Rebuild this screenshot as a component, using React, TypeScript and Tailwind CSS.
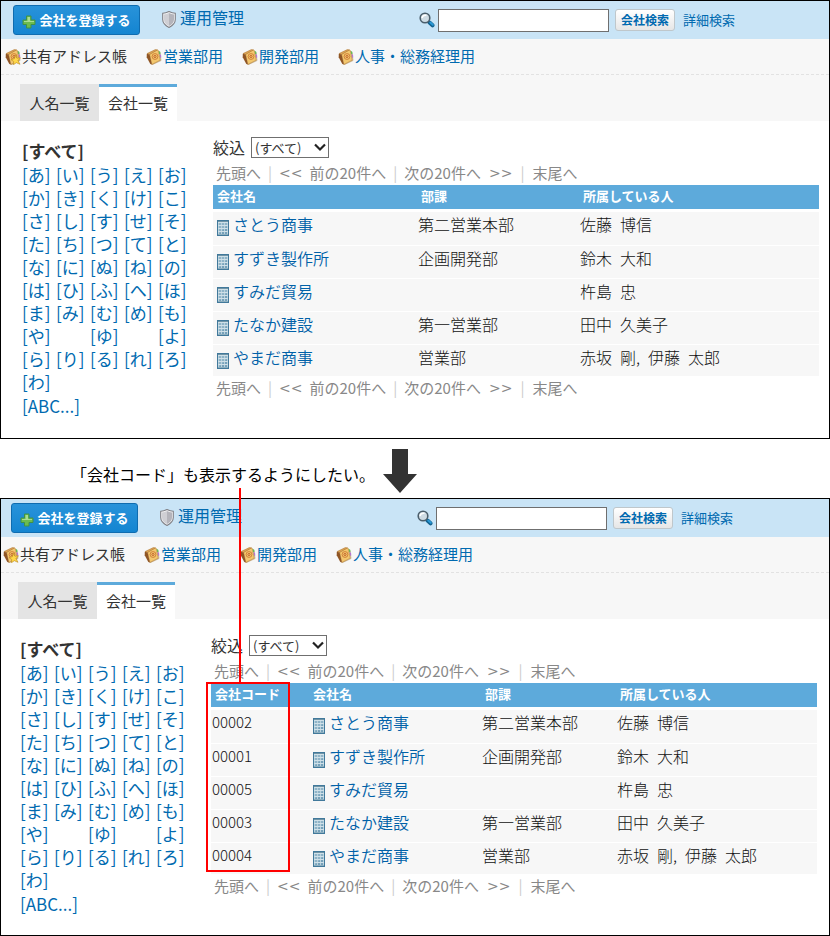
import React from "react";

type Company = {
  code: string;
  name: string;
  department: string;
  members: string;
};

const companies: Company[] = [
  { code: "00002", name: "さとう商事", department: "第二営業本部", members: "佐藤\u2002博信" },
  { code: "00001", name: "すずき製作所", department: "企画開発部", members: "鈴木\u2002大和" },
  { code: "00005", name: "すみだ貿易", department: "", members: "杵島\u2002忠" },
  { code: "00003", name: "たなか建設", department: "第一営業部", members: "田中\u2002久美子" },
  { code: "00004", name: "やまだ商事", department: "営業部", members: "赤坂\u2002剛,\u2002伊藤\u2002太郎" },
];

const kanaRows = [
  "あいうえお",
  "かきくけこ",
  "さしすせそ",
  "たちつてと",
  "なにぬねの",
  "はひふへほ",
  "まみむめも",
  "や ゆ よ",
  "らりるれろ",
  "わ",
];

const books = ["営業部用", "開発部用", "人事・総務経理用"];

const PlusIcon = () => (
  <svg width="14" height="14" viewBox="0 0 14 14" aria-hidden="true">
    <path
      d="M4.500 1h4.500v4H13v4.500H9V13H4.500V9.500H1V5h3.500z"
      fill="#6cbb4e"
      stroke="#3f9148"
      strokeWidth="1"
    />
    <path d="M5.500 2H8v4h4v1H2V6h3.500z" fill="#a9dd92" />
  </svg>
);

const ShieldIcon = () => (
  <svg width="14" height="17" viewBox="0 0 14 17" aria-hidden="true">
    <path
      d="M.7 2.300C3 2.300 5 1.600 7 .6c2 1 4 1.700 6.300 1.700v6.200c0 3.700-2.500 6-6.300 7.900C3.200 14.500.7 12.200.7 8.500z"
      fill="#f4f4f6"
      stroke="#808086"
      strokeWidth="1.100"
    />
    <path d="M7 2c1.600.8 3.200 1.300 5 1.400v5.100c0 3-1.800 4.900-5 6.600z" fill="#b4b4bb" />
    <path d="M2 3.400C3.800 3.300 5.400 2.800 7 2v13.100C3.800 13.400 2 11.500 2 8.500z" fill="#cfcfd4" />
  </svg>
);

const SearchIcon = () => (
  <svg width="16" height="16" viewBox="0 0 16 16" aria-hidden="true">
    <path d="M10.500 10.500l3 2.800" stroke="#12618f" strokeWidth="4" strokeLinecap="round" />
    <path d="M11.300 10.500l2.500 2.300" stroke="#2b9ad6" strokeWidth="2" strokeLinecap="round" />
    <circle cx="6" cy="6" r="4.800" fill="#cfdce4" stroke="#4b5e6b" strokeWidth="1.600" />
    <path d="M3 6C3.500 4 5 3 7.500 3.300" stroke="#fff" strokeWidth="1.500" fill="none" />
  </svg>
);

const BookIcon = ({ starred = false }: { starred?: boolean }) => (
  <svg width="16" height="16" viewBox="0 0 16 16" aria-hidden="true">
    <path d="M11.500 1.200l2.300 2.300 1.200 8-8.500 4z" fill="#f3ead6" stroke="#a98a5f" strokeWidth=".6" />
    <path d="M12.500 1.800l1.700.9.3 2.300-1.400.3z" fill="#5fbf5a" />
    <path d="M13.200 5.300l1.800.3.300 2.800-1.500.3z" fill="#b678cf" />
    <path d="M3.500 5.300L11.300.9l.9.6 2 9.700-8.400 4.300z" fill="#f3c76e" stroke="#b9853d" strokeWidth=".6" />
    <path d="M1 4.600L9.300.6l2 .3-7.700 4.500z" fill="#e0a85a" stroke="#a8702a" strokeWidth=".5" />
    <path d="M.8 4.800l2.800.7 2.300 10-1.600-.6L.7 8.200z" fill="#8f5524" />
    <circle cx="9" cy="7.500" r="2.900" fill="none" stroke="#c9702c" strokeWidth=".8" />
    <circle cx="9" cy="7.500" r="1.100" fill="none" stroke="#b9521f" strokeWidth=".8" />
    {starred && (
      <path
        d="M10.600 6.300l1.300 2.900 3.600-.4-2.500 2.700 2 3.800-3.700-1.600-2.900 2.100.3-3.300-2.700-1.900 3.400-.9z"
        fill="#ffd84a"
        stroke="#b8861c"
        strokeWidth=".6"
      />
    )}
  </svg>
);

const BuildingIcon = () => (
  <svg width="12" height="16" viewBox="0 0 12 16" aria-hidden="true">
    <rect width="12" height="16" fill="#41799b" />
    <rect x="1" y="1" width="10" height="14" fill="#8fb4c8" />
    <rect x="1" y="1" width="10" height="1" fill="#6f94a6" />
    <path d="M1 15L11 5v10z" fill="#76a1ba" />
    <path d="M1.500 2v12M4.500 2v12M7.500 2v12M10.500 2v12" stroke="#b9d1dc" />
    <path d="M1 2.500h10M1 5.500h10M1 8.500h10M1 11.500h10" stroke="#cfe0e8" />
    <path d="M1 14.500h10" stroke="#8fb0c0" />
  </svg>
);

const Pager = () => (
  <div className="flex h-6 items-center pl-[3px] text-[15px] text-[#888]">
    <span>先頭へ</span>
    <span className="mx-[7px] text-[#ccc]">|</span>
    <span className="font-[DejaVu_Sans,sans-serif] text-sm">&lt;&lt;</span>
    <span className="ml-[7px]">前の20件へ</span>
    <span className="mx-[7px] text-[#ccc]">|</span>
    <span>次の20件へ</span>
    <span className="ml-2 font-[DejaVu_Sans,sans-serif] text-sm">&gt;&gt;</span>
    <span className="mx-2 text-[#ccc]">|</span>
    <span>末尾へ</span>
  </div>
);

const KanaIndex = () => (
  <nav className="w-[191px] shrink-0 pt-[18px] text-[17px] leading-[23px] text-[#006ab0]">
    <a href="#all" className="block h-6 font-bold text-[#333]">
      [すべて]
    </a>
    {kanaRows.map((row) => (
      <div key={row} className="grid grid-cols-[repeat(5,34px)]">
        {row.split("").map((kana, i) =>
          kana === " " ? (
            <span key={i} />
          ) : (
            <a key={i} href={`#${kana}`}>
              [{kana}]
            </a>
          )
        )}
      </div>
    ))}
    <a href="#abc" className="block pt-px">
      [ABC...]
    </a>
  </nav>
);

const CompanyTable = ({ showCode }: { showCode: boolean }) => (
  <table className="w-full table-fixed border-collapse text-left">
    <thead>
      <tr className="h-6 bg-[#5daadb] text-[13px] leading-5 text-white">
        {showCode && <th className="w-[98px] p-0 pb-[2px] pl-1">会社コード</th>}
        <th className={showCode ? "w-[172px] p-0 pb-[2px] pl-1" : "w-[204px] p-0 pb-[2px] pl-1"}>会社名</th>
        <th className={showCode ? "w-[135px] p-0 pb-[2px] pl-1" : "w-[162px] p-0 pb-[2px] pl-1"}>部課</th>
        <th className="p-0 pb-[2px] pl-1">所属している人</th>
      </tr>
    </thead>
    <tbody className="text-base font-light leading-6 text-[#111]">
      <tr className="h-[3px]" aria-hidden="true" />
      {companies.map((company) => (
        <tr
          key={company.code}
          className="h-[33px] border-b border-white bg-[#f7f7f7] align-top last:h-8 last:border-b-0"
        >
          {showCode && <td className="p-0 pl-px text-[15px]">{company.code}</td>}
          <td className="p-0 pl-1">
            <a href="#company" className="flex gap-1 font-[350] text-[#0061a8]">
              <span className="pt-2">
                <BuildingIcon />
              </span>
              {company.name}
            </a>
          </td>
          <td className="p-0 pl-px">{company.department}</td>
          <td className="p-0 pl-px">{company.members}</td>
        </tr>
      ))}
    </tbody>
  </table>
);

const AddressBook = ({ id, showCode = false }: { id: string; showCode?: boolean }) => {
  const inset = showCode ? "mr-[2px]" : "ml-[2px]";

  return (
    <section className="border border-black bg-white">
      <header className="bg-[#c9e4f6]">
        <div className={`${inset} flex h-[38px] items-center pl-[10px] pr-[94px]`}>
          <button
            type="button"
            className="flex h-[30px] w-[127px] items-center justify-center gap-[3px] whitespace-nowrap rounded-[3px] border border-[#0f6cb0] bg-linear-to-b from-[#2893da] to-[#1385d1] text-[13px] font-bold text-white"
          >
            <span className="pt-1">
              <PlusIcon />
            </span>
            会社を登録する
          </button>
          <a href="#admin" className="mb-[6px] ml-[22px] flex items-center gap-1 text-base text-[#006ab0]">
            <span className="pt-[5px]">
              <ShieldIcon />
            </span>
            運用管理
          </a>
          <form className="ml-auto flex items-center" onSubmit={(e) => e.preventDefault()}>
            <label htmlFor={`${id}-search`} className="mr-[3px]" aria-label="会社検索">
              <SearchIcon />
            </label>
            <input
              id={`${id}-search`}
              type="text"
              className="h-[23px] w-[171px] border border-[#6f6f6f] bg-white px-1 text-sm"
            />
            <button
              type="submit"
              className="ml-[6px] h-[22px] w-[60px] whitespace-nowrap rounded-[3px] border border-[#bfc7cb] bg-linear-to-b from-white to-[#e6e6e6] text-xs font-bold text-[#006ab0]"
            >
              会社検索
            </button>
            <a href="#detail" className="ml-2 text-[13px] text-[#006ab0]">
              詳細検索
            </a>
          </form>
        </div>
      </header>

      <div className="bg-[#f7f7f7]">
        <nav className="border-b border-dashed border-[#e2e2e2]">
          <div className={`${inset} flex h-[35px] items-center gap-[19px] pl-[2px] text-[15px] text-[#006ab0]`}>
            <a href="#shared" className="flex items-center gap-px text-[#333]">
              <BookIcon starred />
              共有アドレス帳
            </a>
            {books.map((book) => (
              <a key={book} href="#book" className="flex items-center gap-px">
                <BookIcon />
                {book}
              </a>
            ))}
          </div>
        </nav>
        <div className={`${inset} flex pl-[17px] pt-[9px] text-[15px] text-[#333]`}>
          <a href="#people" className="flex h-[37px] w-[79px] items-center justify-center bg-[#e4e4e4] pt-px">
            人名一覧
          </a>
          <a
            href="#companies"
            className="flex h-[37px] w-[78px] items-center justify-center border-t-[3px] border-[#5daadb] bg-white pb-px"
          >
            会社一覧
          </a>
        </div>
      </div>

      <div className={`${inset} ${showCode ? "pb-5" : "pb-[21px]"} flex pl-[19px] pr-[10px]`}>
        <KanaIndex />
        <main className="min-w-0 flex-1 pt-4">
          <div className="flex h-6 items-start text-base leading-5 text-[#333]">
            <label htmlFor={`${id}-filter`}>絞込</label>
            <div className="relative ml-[6px]">
              <select
                id={`${id}-filter`}
                className="block h-[21px] w-[78px] appearance-none border border-[#6f6f6f] bg-white pl-[3px] text-[13px] leading-[19px]"
              >
                <option>(すべて)</option>
              </select>
              <svg
                className="pointer-events-none absolute right-[3px] top-[6px]"
                width="12"
                height="9"
                viewBox="0 0 12 9"
                aria-hidden="true"
              >
                <path d="M1 1.500l5 5 5-5" fill="none" stroke="#222" strokeWidth="2.200" />
              </svg>
            </div>
          </div>
          <Pager />
          <div className="relative">
            <CompanyTable showCode={showCode} />
            {showCode && (
              <>
                <div className="absolute -left-[5px] -top-px bottom-[2px] w-[84px] border-2 border-[#f00]" />
                <div className="absolute -top-[195px] left-7 h-[195px] w-[2px] bg-[#f00]" />
              </>
            )}
          </div>
          <Pager />
        </main>
      </div>
    </section>
  );
};

const App = () => {
  return (
    <div className="bg-white font-['Noto_Sans_CJK_JP',sans-serif]">
      <AddressBook id="before" />
      <div className="flex h-[59px] items-center gap-2 pl-[71px] text-base text-black">
        <p className="pt-[10px]">「会社コード」も表示するようにしたい。</p>
        <svg width="34" height="44" viewBox="0 0 34 44" className="mt-1" aria-hidden="true">
          <path d="M9 0h16v25h9L17 44 0 25h9z" fill="#333" />
        </svg>
      </div>
      <AddressBook id="after" showCode />
    </div>
  );
};

export default App;
